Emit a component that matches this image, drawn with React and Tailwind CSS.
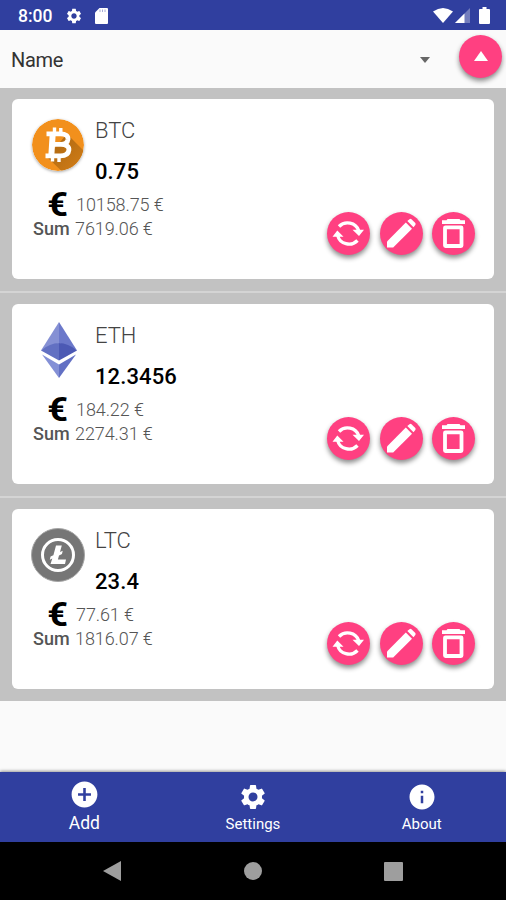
import { MdAddCircle, MdInfo, MdSettings } from "react-icons/md";

const coins = [
  { id: "btc", name: "BTC", amount: "0.75", price: "10158.75 €", sum: "7619.06 €" },
  { id: "eth", name: "ETH", amount: "12.3456", price: "184.22 €", sum: "2274.31 €" },
  { id: "ltc", name: "LTC", amount: "23.4", price: "77.61 €", sum: "1816.07 €" },
];

const BtcLogo = () => (
  <svg viewBox="0 0 52 52" className="h-[52px] w-[52px] rounded-full shadow-[0_1px_3px_rgba(0,0,0,0.35)]">
    <defs>
      <clipPath id="btc-disc">
        <circle cx="26" cy="26" r="26" />
      </clipPath>
      <linearGradient id="btc-shade" x1="0" y1="0" x2="1" y2="1">
        <stop offset="0" stopColor="#a8640f" />
        <stop offset="1" stopColor="#e0861a" />
      </linearGradient>
    </defs>
    <circle cx="26" cy="26" r="26" fill="#f2901c" />
    <path d="M35 15L62 42L42 64L15 38Z" fill="url(#btc-shade)" clipPath="url(#btc-disc)" />
    <g stroke="#fff" fill="none">
      <path d="M22.500 8.500V15M28.800 9V15M20.500 36V42.500M27 36V43" strokeWidth="3.400" />
      <path d="M14.500 14.800H28.500C34 14.800 36.300 17 36 20.300C35.600 23.800 33 25.300 29 25.300H20.500M29 25.300C34.500 25.500 37.200 27.700 36.900 31C36.500 34.800 33.500 36.800 28.500 36.800H13.500" strokeWidth="4.800" />
      <path d="M20.700 14.500L19.300 37.500" strokeWidth="6" />
    </g>
  </svg>
);

const EthLogo = () => (
  <svg viewBox="0 0 36 56" className="ml-[2px] h-14 w-9">
    <path d="M18 0L0 28.500L18 21Z" fill="#8590d4" />
    <path d="M18 0L36 28.500L18 21Z" fill="#6b78ca" />
    <path d="M0 28.500Q9 21 18 21V38.500Z" fill="#6270c2" />
    <path d="M36 28.500Q27 21 18 21V38.500Z" fill="#4c59b4" />
    <path d="M1 32.500L18 42.500V56Z" fill="#8490d6" />
    <path d="M35 32.500L18 42.500V56Z" fill="#6270c4" />
  </svg>
);

const LtcLogo = () => (
  <svg viewBox="0 0 54 54" className="h-[54px] w-[54px]">
    <circle cx="27" cy="27" r="26.500" fill="#767676" stroke="#a5a5a5" />
    <circle cx="27" cy="27" r="15.500" fill="none" stroke="#fff" strokeWidth="3" />
    <path d="M25 17.500H30.800L29 24L31.700 22.800L31 26L28 27.500L26.900 31.500H35L34 36H19.500L21.300 30.500L18.800 31.700L19.600 28.500L22.400 27.200Z" fill="#fff" />
  </svg>
);

const logos = { btc: BtcLogo, eth: EthLogo, ltc: LtcLogo };

const SyncIcon = () => (
  <svg viewBox="0 0 43 43" className="h-[43px] w-[43px]">
    <path d="M12 14.500A11.500 10.800 0 0 1 31.600 18.500M30.500 28.500A11.500 10.800 0 0 1 10.700 23.500" fill="none" stroke="#fff" strokeWidth="3.300" />
    <path d="M25.500 17.700H37L32 24ZM5.500 24.800H16.500L10.300 18.500Z" fill="#fff" />
  </svg>
);

const EditIcon = () => (
  <svg viewBox="0 0 43 43" className="h-[43px] w-[43px]" fill="#fff">
    <path d="M7 29.500V35.500H13.200L32 16.800L25.800 10.500Z" />
    <path d="M27.300 9L29.500 7.200Q30.500 6.500 31.500 7.300L35.300 11.100Q36 12 35.300 13L33.500 15.300Z" />
  </svg>
);

const DeleteIcon = () => (
  <svg viewBox="0 0 43 43" className="h-[43px] w-[43px]">
    <path d="M15.500 7H27.500L28.500 8.200H33V12H10V8.200H14.500Z" fill="#fff" />
    <rect x="13" y="15.300" width="16.500" height="18.700" rx="0.500" fill="none" stroke="#fff" strokeWidth="3.800" />
  </svg>
);

const RoundButton = ({ label, children }) => (
  <button
    type="button"
    aria-label={label}
    className="flex h-[43px] w-[43px] shrink-0 items-center justify-center rounded-full bg-[#ff4081] text-white shadow-[0_3px_5px_rgba(0,0,0,0.45)]"
  >
    {children}
  </button>
);

const StatusBar = () => (
  <div className="flex h-[30px] items-center bg-[#303f9f] pr-4 pl-[18px] text-white">
    <span className="mt-[3px] w-[47px] text-[17.500px] leading-none font-medium">8:00</span>
    <MdSettings className="mt-px h-[18px] w-[18px]" />
    <svg viewBox="0 0 13 16" className="mt-px ml-3 h-4 w-[13px]">
      <path d="M4.500 0H12Q13 0 13 1V15Q13 16 12 16H1Q0 16 0 15V4.500Z" fill="#fff" />
      <path d="M5 1.500V4M7.500 1.500V4M10 1.500V4" stroke="#8f97cb" strokeWidth="0.800" />
    </svg>
    <svg viewBox="0 0 20 15" className="ml-auto h-[15px] w-5">
      <path d="M0 3.500Q10 -3.500 20 3.500L10 15Z" fill="#fff" />
    </svg>
    <svg viewBox="0 0 15 15" className="ml-[2px] h-[15px] w-[15px]">
      <path d="M0 15L15 0V15Z" fill="#737dbd" />
      <path d="M0 15L9.500 5.500V15Z" fill="#fff" />
    </svg>
    <svg viewBox="0 0 11 17" className="ml-[9px] h-[17px] w-[11px]">
      <path d="M3.500 0H7.500V2H10Q11 2 11 3V16Q11 17 10 17H1Q0 17 0 16V3Q0 2 1 2H3.500Z" fill="#fff" />
    </svg>
  </div>
);

const CoinCard = ({ coin }) => {
  const Logo = logos[coin.id];
  return (
    <div className="flex h-[180px] justify-between rounded-md bg-white pr-[19px]">
      <div className="pt-[18px] pl-[19px]">
        <div className="flex h-[74px]">
          <div className="flex h-[56px] w-[54px] items-center justify-center">
            <Logo />
          </div>
          <div className="pt-px pl-[10px]">
            <p className="text-[22px] leading-[26px] font-light text-[#444]">{coin.name}</p>
            <p className="mt-[15px] text-[22px] leading-[26px] font-medium tracking-[0.1px] text-black">{coin.amount}</p>
          </div>
        </div>
        <div className="flex h-[25px] items-center">
          <span className="mt-[2px] w-[37px] origin-right scale-x-110 text-right text-[33px] leading-none font-bold text-black">€</span>
          <span className="mt-px pl-2 text-[18px] font-light tracking-[-0.1px] text-[#555]">{coin.price}</span>
        </div>
        <div className="flex h-[25px] items-center pl-[2px]">
          <span className="w-[42px] text-[18px] font-medium text-[#555]">Sum</span>
          <span className="text-[18px] font-light tracking-[-0.1px] text-[#555]">{coin.sum}</span>
        </div>
      </div>
      <div className="flex gap-[9.500px] pt-[112.500px]">
        <RoundButton label="Refresh"><SyncIcon /></RoundButton>
        <RoundButton label="Edit"><EditIcon /></RoundButton>
        <RoundButton label="Delete"><DeleteIcon /></RoundButton>
      </div>
    </div>
  );
};

export default function App() {
  return (
    <div className="flex h-[900px] w-[506px] flex-col overflow-hidden bg-[#fafafa] font-['Roboto',sans-serif]">
      <StatusBar />
      <div className="flex h-[58px] items-center pr-1 pl-[11px]">
        <span className="mt-[2px] grow text-[20px] tracking-[-0.3px] text-[#333]">Name</span>
        <svg viewBox="0 0 10 6" className="mt-px mr-[29px] h-[6px] w-[10px]">
          <path d="M0 0H10L5 6Z" fill="#666" />
        </svg>
        <div className="-mt-[5px]">
          <RoundButton label="Sort ascending">
            <svg viewBox="0 0 14 10" className="-mt-px h-[10px] w-[14px]">
              <path d="M0 10L7 0L14 10Z" fill="#fff" />
            </svg>
          </RoundButton>
        </div>
      </div>

      <div className="divide-y-2 divide-[#d4d4d4] bg-[#c2c2c2]">
        {coins.map((coin) => (
          <div key={coin.id} className="px-3 pt-[11px] pb-3">
            <CoinCard coin={coin} />
          </div>
        ))}
      </div>

      <div className="mt-auto grid h-[70px] shrink-0 grid-cols-3 bg-[#303f9f] text-white shadow-[0_-1px_3px_rgba(0,0,0,0.4)]">
        <div className="flex flex-col items-center pt-[7px]">
          <MdAddCircle className="h-[31px] w-[31px]" />
          <span className="mt-[3px] text-[17.500px] leading-5">Add</span>
        </div>
        <div className="flex flex-col items-center pt-[10px]">
          <MdSettings className="h-[30px] w-[30px]" />
          <span className="mt-[2px] text-[15px] leading-5">Settings</span>
        </div>
        <div className="flex flex-col items-center pt-[10px]">
          <MdInfo className="h-[30px] w-[30px]" />
          <span className="mt-[2px] text-[15px] leading-5">About</span>
        </div>
      </div>
      <div className="flex h-[58px] shrink-0 items-center justify-between bg-black pr-[103px] pl-[103px]">
        <svg viewBox="0 0 18 20" className="h-5 w-[18px]">
          <path d="M0 10L18 0V20Z" fill="#9e9e9e" />
        </svg>
        <div className="h-[18px] w-[18px] rounded-full bg-[#9e9e9e]" />
        <div className="h-[19px] w-[19px] rounded-[1px] bg-[#9e9e9e]" />
      </div>
    </div>
  );
}
